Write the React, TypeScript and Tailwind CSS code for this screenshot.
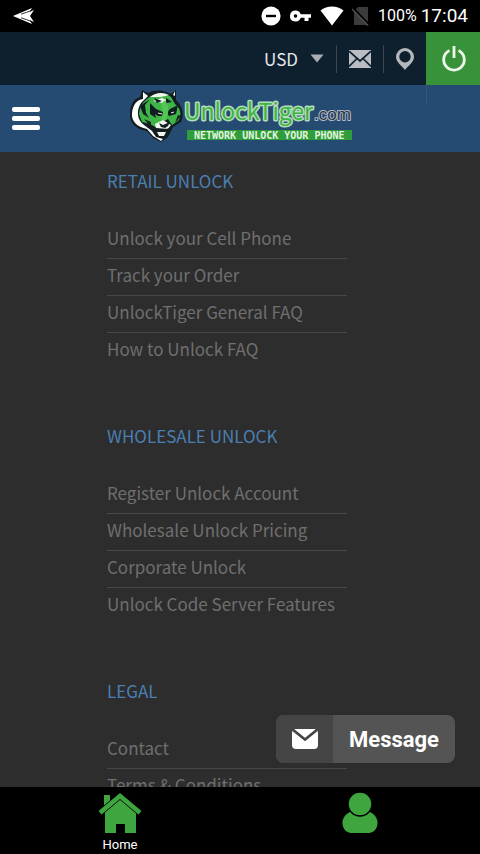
/**
 * App.tsx: UnlockTiger mobile footer menu
 * Status bar, currency bar, brand header, link columns and tab bar.
 */
import type { ReactNode } from 'react';

const SECTIONS = [
    {
        title: 'RETAIL UNLOCK',
        links: ['Unlock your Cell Phone', 'Track your Order', 'UnlockTiger General FAQ', 'How to Unlock FAQ'],
    },
    {
        title: 'WHOLESALE UNLOCK',
        links: ['Register Unlock Account', 'Wholesale Unlock Pricing', 'Corporate Unlock', 'Unlock Code Server Features'],
    },
    {
        title: 'LEGAL',
        links: ['Contact', 'Terms & Conditions'],
    },
];

function StatusBar() {
    return (
        <div className="flex h-8 shrink-0 items-center bg-black px-3 font-[Roboto,sans-serif] text-white">
            <svg width="24" height="20" viewBox="0 0 24 20" fill="#fff">
                <path d="M1 10 20 2 17.500 6 22 4 18 10 22 16 17.500 14 20 18Z" />
                <path d="M9 8.200 19 4.800M9 11.800 19 15.200" stroke="#000" strokeWidth=".8" fill="none" />
            </svg>
            <div className="ml-auto flex items-center">
                <svg width="20" height="20" viewBox="0 0 20 20">
                    <circle cx="10" cy="10" r="9.6" fill="#fff" />
                    <path d="M5 10h10" stroke="#000" strokeWidth="2.4" />
                </svg>
                <svg className="ml-2" width="23" height="14" viewBox="0 0 23 14" fill="#fff">
                    <path fillRule="evenodd" d="M6.500 1.500a5.500 5.500 0 1 0 5.200 7.300h3.800V12h4V8.800h2.500V5.200H11.700A5.500 5.500 0 0 0 6.500 1.500Zm0 3.700a1.800 1.800 0 1 1 0 3.600 1.800 1.800 0 0 1 0-3.600Z" />
                </svg>
                <svg className="ml-2" width="24" height="20" viewBox="0 0 24 20">
                    <path d="M12 19.500.5 4.500C7-.8 17-.8 23.500 4.500Z" fill="#fff" />
                </svg>
                <svg className="ml-2" width="18" height="20" viewBox="0 0 18 20">
                    <path d="M6 1h10v18H2V5Z" fill="#3b3b3b" />
                    <path d="M1 2 17 18.500" stroke="#000" strokeWidth="2" />
                    <path d="M0 3 16 19.500" stroke="#505050" strokeWidth="1.500" />
                </svg>
                <span className="ml-2 text-base leading-8">100%</span>
                <span className="ml-1 text-[19px] leading-8">17:04</span>
            </div>
        </div>
    );
}

function TopBar() {
    return (
        <div className="flex h-[53px] shrink-0 items-center justify-end bg-[#0e1f2e]">
            <button type="button" className="flex items-center gap-3 pr-3 font-['Noto_Sans_CJK_SC',sans-serif] text-[17px] text-[#e4e8ec]">
                USD
                <svg width="14" height="9" viewBox="0 0 14 9" fill="#a9adb3">
                    <path d="M.5.500h13L7 8.500Z" />
                </svg>
            </button>
            <div className="h-7 w-px bg-[#3b4651]" />
            <button type="button" aria-label="Mail" className="px-3">
                <svg width="22" height="18" viewBox="0 0 22 18">
                    <path d="M0 0h22v18H0Z" fill="#b9bdc1" />
                    <path d="M0 1.200 11 11 22 1.200M0 16.500 8 8.500M22 16.500 14 8.500" fill="none" stroke="#0e1f2e" strokeWidth="1.700" />
                </svg>
            </button>
            <div className="h-7 w-px bg-[#3b4651]" />
            <button type="button" aria-label="Location" className="px-3">
                <svg width="18" height="22" viewBox="0 0 18 22">
                    <path fillRule="evenodd" d="M9 0a9 9 0 0 0-9 9c0 5 5.500 8.500 9 13 3.500-4.500 9-8 9-13a9 9 0 0 0-9-9Zm0 3a5.700 5.700 0 1 1 0 11.400A5.700 5.700 0 0 1 9 3Z" fill="#b4b8bc" />
                </svg>
            </button>
            <button type="button" aria-label="Log in" className="flex h-full w-[54px] items-center justify-center bg-[#38923a]">
                <svg width="26" height="28" viewBox="0 0 26 28" fill="none" stroke="#eef7ea" strokeWidth="2.800">
                    <path d="M9.500 5.500A10.300 10.300 0 1 0 18.500 5.500M14 1v12" />
                </svg>
            </button>
        </div>
    );
}

function Logo() {
    return (
        <svg width="228" height="58" viewBox="0 0 228 58" role="img" aria-label="UnlockTiger.com">
            {/* Tiger head */}
            <path d="M14 1 20 4C27 0 36 1 43 5L48 1 48 11C54 17 57 25 53 33L45 38 40 48 33 53 25 49 19 42C9 41 1 34 2 25 2 15 6 10 12 8Z" fill="#111d20" />
            <path d="M15 3 20 7 13 14C8 22 9 31 16 36L24 42 28 48 35 50 33 52 25 47 19 40C9 38 3 32 4 24 5 15 9 11 15 10Z" fill="#fff" />
            <path d="M19 10C27 3 37 3 43 8L47 15C53 19 54 27 50 32L44 36 40 30 35 33 29 39 22 35 14 33 11 25C12 18 14 14 19 10Z" fill="#3fb548" />
            <path d="M22 8C28 3 35 3 41 6L33 8ZM25 12 34 9 41 12 34 14ZM27 35 35 31 43 36 40 40 28 39ZM29 43 38 43 36 47 31 47ZM45 6 47 2 47 7Z" fill="#eef7ee" />
            {/* Stripes, eyes and mouth */}
            <path d="M22 10 17 16 18 24 21 29 15 25 12 17ZM22 14 28 20 37 24 36 27 30 27 27 25 28 29 22 25ZM39 24 42 20 50 16 48 25 41 27ZM26 9 34 12 29 14ZM38 9 44 13 38 14ZM16 30 23 33 23 38ZM50 26 53 27 47 34ZM31 34 35 36 42 33 40 37 37 39 33 38ZM27 39 34 41 42 39 39 42 29 42Z" fill="#111d20" />
            <path d="M33 15 37 11 40 17 40 24 38 31 33 31 35 23Z" fill="#53c653" />
            <path d="M30 24 34 25M43 24 46 23" stroke="#dff3dd" strokeWidth="1" />
            {/* Wordmark */}
            <path d="M59 41h165v10H59Z" fill="#2f9d3b" />
            <g strokeLinejoin="round" paintOrder="stroke">
                <text x="56" y="31" fontSize="23" fontFamily="'Noto Sans CJK SC', sans-serif" fill="#3fb546" stroke="#b5dcbb" strokeWidth="3">UnlockTiger</text>
                <text x="186" y="31" fontSize="17" fontFamily="'Liberation Sans', sans-serif" fill="#2c3746" stroke="#aebac8" strokeWidth="2">.com</text>
            </g>
            <text x="66" y="50" fontSize="10" fontWeight="700" fontFamily="'DejaVu Sans Mono', monospace" fill="#e2f5df">NETWORK UNLOCK YOUR PHONE</text>
        </svg>
    );
}

function Header() {
    return (
        <header className="flex h-[67px] shrink-0 items-center bg-[#264b73] pl-3">
            <button type="button" aria-label="Menu" className="flex w-7 flex-col gap-1">
                <span className="h-[5px] rounded-xs bg-white" />
                <span className="h-[5px] rounded-xs bg-white" />
                <span className="h-[5px] rounded-xs bg-white" />
            </button>
            <a href="#" className="mr-auto ml-[88px] self-start pt-1">
                <Logo />
            </a>
            <div className="mr-[53px] h-5 w-px self-start bg-[#3c5570]" />
        </header>
    );
}

function TabLink({ label, children }: { label: string; children: ReactNode }) {
    return (
        <a href="#" aria-label={label} className="flex flex-1 flex-col items-center pt-[5px]">
            {children}
        </a>
    );
}

export default function App() {
    return (
        <div className="relative flex h-screen flex-col overflow-hidden bg-[#2d2d2d]">
            <StatusBar />
            <TopBar />
            <Header />

            <main className="ml-[107px] min-h-0 w-1/2 flex-1 overflow-hidden pt-[15px] font-['Noto_Sans_CJK_SC',sans-serif] text-[17px]">
                {SECTIONS.map((section) => (
                    <section key={section.title} className="mb-[53px]">
                        <h2 className="mb-7 leading-[27px] text-[#4a7fb2]">{section.title}</h2>
                        <ul className="divide-y divide-[#484848]">
                            {section.links.map((link) => (
                                <li key={link} className="pb-1">
                                    <a href="#" className="block leading-8 whitespace-nowrap text-[#6f6f6f]">{link}</a>
                                </li>
                            ))}
                        </ul>
                    </section>
                ))}
            </main>

            {/* Tab bar */}
            <nav className="flex h-[67px] shrink-0 bg-black font-[Roboto,sans-serif]">
                <TabLink label="Home">
                    <svg width="44" height="44" viewBox="0 0 44 44" fill="#3fa53f">
                        <path d="M6 3h6v7l-6 6Z" />
                        <path d="M22 5.500 38 19V41H27V32h-9v9H7V19Z" />
                        <path d="m22 1 21.500 18-3 3.500L22 7 3.500 22.500.5 19Z" stroke="#000" strokeWidth="1.500" paintOrder="stroke" />
                    </svg>
                    <span className="text-[13px] leading-[18px] text-white">Home</span>
                </TabLink>
                <TabLink label="Account">
                    <svg width="36" height="44" viewBox="0 0 36 44" fill="#3fa53f">
                        <path d="M8 20C2 23 0 28 .5 32c.5 5 4 9 9 9h17c5 0 8.500-4 9-9C36 28 34 23 28 20Z" />
                        <circle cx="18" cy="12" r="12" stroke="#000" strokeWidth="1.500" />
                    </svg>
                </TabLink>
            </nav>

            <button type="button" className="absolute right-[25px] bottom-[91px] flex h-12 items-center overflow-hidden rounded-lg bg-[#545454] font-[Roboto,sans-serif] text-white">
                <span className="flex h-full w-[57px] items-center justify-center bg-[#454545]">
                    <svg width="26" height="20" viewBox="0 0 26 20">
                        <path d="M4 0h18q4 0 4 4v12q0 4-4 4H4q-4 0-4-4V4q0-4 4-4Z" fill="#fff" />
                        <path d="M0 0 13 10.500 26 0" fill="none" stroke="#454545" strokeWidth="2.600" />
                    </svg>
                </span>
                <span className="px-4 text-[22px] font-bold">Message</span>
            </button>
        </div>
    );
}
